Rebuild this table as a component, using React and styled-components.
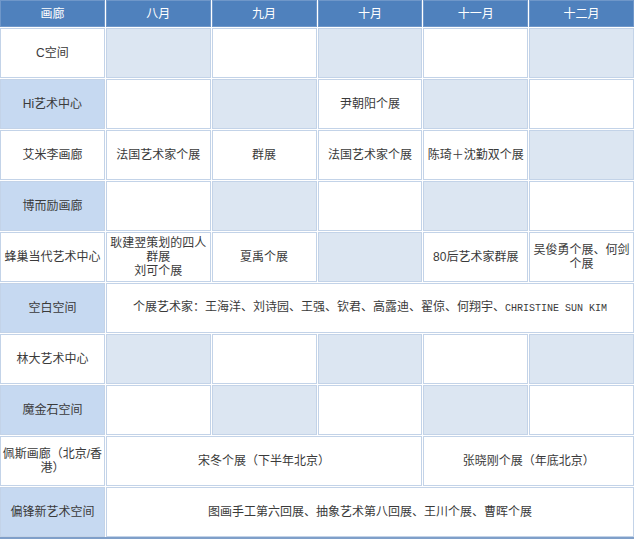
import React from 'react';
import styled, { createGlobalStyle } from 'styled-components';

const GlobalStyle = createGlobalStyle`
	html, body {
		margin: 0;
		padding: 0;
		background: #ffffff;
	}
	body {
		font-family: "Liberation Sans", "Noto Sans CJK SC", sans-serif;
	}
`;

const ScheduleTable = styled.div`
	display: grid;
	grid-template-columns: repeat(6, 1fr);
	grid-template-rows: 27px repeat(10, 50px);
	gap: 1px;
	width: 634px;
	background: #ffffff;
	border-bottom: 2px solid #7f9fc9;
	font-size: 12px;
	line-height: 14px;
	color: #3a3a3a;
	text-spacing-trim: space-all;
`;

const Cell = styled.div`
	display: flex;
	align-items: center;
	padding: 0 2px;
	box-sizing: border-box;
	border: 1px solid #c3d3e8;
	background: ${(p) => (p.$shaded ? '#dce6f2' : '#ffffff')};
	grid-column: span ${(p) => p.$span || 1};
`;

const CellText = styled.div`
	width: 100%;
	text-align: center;
`;

const HeaderCell = styled(Cell)`
	background: #4f81bd;
	border-color: #6f97c9;
	color: #ffffff;
`;

const GalleryCell = styled(Cell)`
	padding: 0;
	background: ${(p) => (p.$shaded ? '#c6d9f1' : '#ffffff')};
`;

const Latin = styled.span`
	font-family: "Liberation Mono", monospace;
	font-size: 10px;
`;

const months = ['八月', '九月', '十月', '十一月', '十二月'];

const rows = [
	{ name: 'C空间', cells: [{ s: 1 }, {}, { s: 1 }, {}, { s: 1 }] },
	{ name: 'Hi艺术中心', cells: [{}, { s: 1 }, { t: '尹朝阳个展' }, { s: 1 }, {}] },
	{
		name: '艾米李画廊',
		cells: [
			{ t: '法国艺术家个展' },
			{ t: '群展' },
			{ t: '法国艺术家个展' },
			{ t: '陈琦＋沈勤双个展' },
			{ s: 1 },
		],
	},
	{ name: '博而励画廊', cells: [{}, { s: 1 }, {}, { s: 1 }, {}] },
	{
		name: '蜂巢当代艺术中心',
		cells: [
			{ t: (<>耿建翌策划的四人群展<br />刘可个展</>) },
			{ t: '夏禹个展' },
			{ s: 1 },
			{ t: '80后艺术家群展' },
			{ t: '吴俊勇个展、何剑个展' },
		],
	},
	{
		name: '空白空间',
		cells: [
			{
				span: 5,
				t: (<>个展艺术家：王海洋、刘诗园、王强、钦君、高露迪、翟倞、何翔宇、<Latin>CHRISTINE SUN KIM</Latin></>),
			},
		],
	},
	{ name: '林大艺术中心', cells: [{ s: 1 }, {}, { s: 1 }, {}, { s: 1 }] },
	{ name: '魔金石空间', cells: [{}, { s: 1 }, {}, { s: 1 }, {}] },
	{
		name: '佩斯画廊（北京/香港）',
		cells: [
			{ span: 3, t: '宋冬个展（下半年北京）' },
			{ span: 2, t: '张晓刚个展（年底北京）' },
		],
	},
	{
		name: '偏锋新艺术空间',
		cells: [{ span: 5, t: '图画手工第六回展、抽象艺术第八回展、王川个展、曹晖个展' }],
	},
];

const App = () => {
	return (
		<>
			<GlobalStyle />
			<ScheduleTable>
				<HeaderCell>
					<CellText>画廊</CellText>
				</HeaderCell>
				{months.map((month) => (
					<HeaderCell key={month}>
						<CellText>{month}</CellText>
					</HeaderCell>
				))}

				{rows.map((row, i) => (
					<React.Fragment key={i}>
						<GalleryCell $shaded={i % 2 === 1}>
							<CellText>{row.name}</CellText>
						</GalleryCell>
						{row.cells.map((cell, j) => (
							<Cell key={j} $shaded={cell.s} $span={cell.span}>
								{cell.t && <CellText>{cell.t}</CellText>}
							</Cell>
						))}
					</React.Fragment>
				))}
			</ScheduleTable>
		</>
	);
};

export default App;
